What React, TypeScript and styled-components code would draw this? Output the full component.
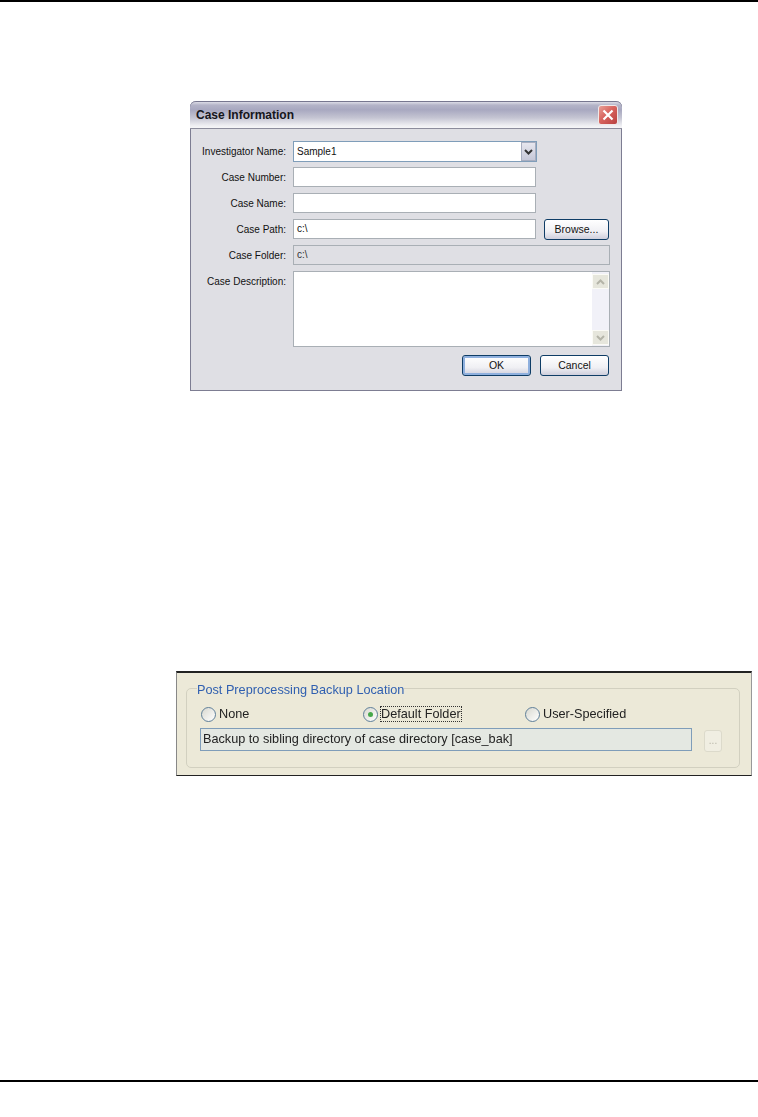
import React from 'react';
import styled, { createGlobalStyle } from 'styled-components';

const Global = createGlobalStyle`
  html, body {
    margin: 0;
    padding: 0;
    background: #fff;
  }
`;

const Page = styled.div`
  width: 758px;
  height: 1117px;
  display: flex;
  flex-direction: column;
  font-family: 'Liberation Sans', Arial, sans-serif;
`;

const Rule = styled.div`
  height: 2px;
  background: #000;
  flex: none;
`;

// case information dialog
const Dialog = styled.div`
  width: 432px;
  height: 290px;
  margin: 99px 0 0 190px;
  box-sizing: border-box;
  display: flex;
  flex-direction: column;
  background: #dfdfe4;
  border: 1px solid #7d7d92;
  border-top: none;
  border-radius: 6px 6px 0 0;
  color: #111;
  font-size: 10px;
`;

const TitleBar = styled.div`
  height: 28px;
  flex: none;
  margin: 0 -1px;
  box-sizing: border-box;
  padding: 0 4px 0 6px;
  display: flex;
  align-items: center;
  justify-content: space-between;
  border-top: 1px solid #77778f;
  border-radius: 6px 6px 0 0;
  border-bottom: 1px solid #8c8c9c;
  background: linear-gradient(#dcdce6 0%, #b4b4c8 12%, #a8a8c0 30%, #c4c4d2 60%, #eeeef2 90%, #f6f6f8 100%);
  font-size: 12px;
  font-weight: bold;
  color: #16161c;
`;

const CloseButton = styled.div`
  width: 20px;
  height: 20px;
  display: flex;
  align-items: center;
  justify-content: center;
  box-sizing: border-box;
  border: 1px solid #f0e8e8;
  border-radius: 3px;
  background: linear-gradient(135deg, #e8a098 0%, #d8645e 45%, #b84040 100%);
`;

const Form = styled.div`
  flex: 1;
  padding-top: 12px;
  display: flex;
  flex-direction: column;
  gap: 5px;
`;

const Row = styled.div`
  display: flex;
  align-items: flex-start;
  min-height: 21px;
`;

const Label = styled.div`
  width: 95px;
  margin-right: 7px;
  flex: none;
  text-align: right;
  line-height: 21px;
  white-space: nowrap;
`;

const TextBox = styled.div<{ $width: number; $disabled?: boolean }>`
  width: ${(p) => p.$width}px;
  height: 20px;
  box-sizing: border-box;
  padding-left: 3px;
  line-height: 18px;
  background: ${(p) => (p.$disabled ? '#dfdfe4' : '#fff')};
  border: 1px solid #a9afb5;
  color: ${(p) => (p.$disabled ? '#333' : '#111')};
`;

const Combo = styled.div`
  width: 244px;
  height: 21px;
  box-sizing: border-box;
  display: flex;
  justify-content: space-between;
  padding-left: 3px;
  line-height: 19px;
  background: #fff;
  border: 1px solid #7f9db9;
`;

const ComboArrow = styled.div`
  width: 15px;
  height: 19px;
  display: flex;
  align-items: center;
  justify-content: center;
  box-sizing: border-box;
  background: linear-gradient(#e6e6ee, #c6c8d8);
  border: 1px solid #f4f4f8;
  outline: 1px solid #a8aec0;
  outline-offset: -1px;
`;

const Button = styled.div<{ $width: number; $isDefault?: boolean }>`
  width: ${(p) => p.$width}px;
  height: 21px;
  box-sizing: border-box;
  text-align: center;
  font-size: 10.5px;
  line-height: 18px;
  border: 1px solid #0f3d66;
  border-radius: 3px;
  background: linear-gradient(#ffffff, #f0f0f4 60%, #cfcfdc);
  box-shadow: ${(p) => (p.$isDefault ? 'inset 0 0 0 2px #8fb0de' : 'none')};
`;

const BrowseButton = styled(Button)`
  margin-left: 8px;
`;

const Memo = styled.div`
  width: 317px;
  height: 76px;
  box-sizing: border-box;
  display: flex;
  justify-content: flex-end;
  background: #fff;
  border: 1px solid #a9afb5;
`;

const ScrollTrack = styled.div`
  width: 17px;
  display: flex;
  flex-direction: column;
  justify-content: space-between;
  padding: 2px 0 1px;
  background: #f1f1f8;
`;

const ScrollButton = styled.div`
  height: 15px;
  display: flex;
  align-items: center;
  justify-content: center;
  box-sizing: border-box;
  border: 1px solid #fbfbf6;
  background: #e6e6dc;
`;

const ButtonBar = styled.div`
  display: flex;
  justify-content: flex-end;
  gap: 9px;
  margin: 3px 12px 0 0;
`;

// backup location panel
const Panel = styled.div`
  width: 576px;
  height: 105px;
  margin: 280px 0 0 176px;
  box-sizing: border-box;
  padding: 6px 10px 0 9px;
  background: #ece9d8;
  border-top: 2px solid #222;
  border-bottom: 1px solid #222;
  border-left: 1px solid #888;
  border-right: 1px solid #999;
  filter: blur(0.35px);
  font-size: 12.7px;
  color: #222;
`;

const Group = styled.fieldset`
  margin: 0;
  width: 554px;
  height: 89px;
  box-sizing: border-box;
  padding: 0 0 0 14px;
  border: 1px solid #d2d0c0;
  border-radius: 5px;
`;

const GroupTitle = styled.legend`
  padding: 4px 0 0;
  margin-left: -4px;
  color: #2f5fb0;
  font-size: 12.7px;
  line-height: 14px;
`;

const RadioRow = styled.div`
  display: flex;
  margin-top: 7px;
  height: 20px;
  align-items: center;
`;

const RadioItem = styled.div`
  width: 162px;
  display: flex;
  align-items: center;
  gap: 3px;
`;

const RadioDot = styled.span<{ $checked?: boolean }>`
  width: 15px;
  height: 15px;
  box-sizing: border-box;
  flex: none;
  display: flex;
  align-items: center;
  justify-content: center;
  border: 1px solid #5f7f99;
  border-radius: 50%;
  background: linear-gradient(135deg, #d8d8d0, #fff);

  &::after {
    content: '';
    width: 5px;
    height: 5px;
    border-radius: 50%;
    background: ${(p) => (p.$checked ? '#46a84a' : 'transparent')};
  }
`;

const RadioText = styled.span<{ $focused?: boolean }>`
  outline: ${(p) => (p.$focused ? '1px dotted #333' : 'none')};
  line-height: 14px;
`;

const PathRow = styled.div`
  display: flex;
  margin: 4px 0 0 -1px;
`;

const PathBox = styled.div`
  width: 492px;
  height: 23px;
  box-sizing: border-box;
  padding-left: 2px;
  line-height: 21px;
  background: #e4e8e2;
  border: 1px solid #7f9db9;
`;

const EllipsisButton = styled.div`
  width: 18px;
  height: 22px;
  margin: 2px 0 0 12px;
  box-sizing: border-box;
  text-align: center;
  line-height: 20px;
  font-size: 10px;
  color: #b8b6a8;
  border: 1px solid #dcdacb;
  border-radius: 3px;
  background: #f0eee2;
`;

const BottomRule = styled(Rule)`
  margin-top: auto;
  margin-bottom: 35px;
`;

const Chevron = ({ up, color }: { up?: boolean; color: string }) => (
  <svg width="9" height="6" viewBox="0 0 9 6">
    <path d={up ? 'M1 5 L4.5 1.5 L8 5' : 'M1 1 L4.5 4.5 L8 1'} fill="none" stroke={color} strokeWidth="2" />
  </svg>
);

const App = () => (
  <Page>
    <Global />
    <Rule />
    <Dialog>
      <TitleBar>
        <span>Case Information</span>
        <CloseButton>
          <svg width="12" height="12" viewBox="0 0 12 12">
            <path d="M1.5 1.5 L10.5 10.5 M10.5 1.5 L1.5 10.5" stroke="#fff" strokeWidth="2.2" />
          </svg>
        </CloseButton>
      </TitleBar>
      <Form>
        <Row>
          <Label>Investigator Name:</Label>
          <Combo>
            Sample1
            <ComboArrow>
              <Chevron color="#333" />
            </ComboArrow>
          </Combo>
        </Row>
        <Row>
          <Label>Case Number:</Label>
          <TextBox $width={243} />
        </Row>
        <Row>
          <Label>Case Name:</Label>
          <TextBox $width={243} />
        </Row>
        <Row>
          <Label>Case Path:</Label>
          <TextBox $width={243}>c:\</TextBox>
          <BrowseButton $width={65}>Browse...</BrowseButton>
        </Row>
        <Row>
          <Label>Case Folder:</Label>
          <TextBox $width={317} $disabled>
            c:\
          </TextBox>
        </Row>
        <Row>
          <Label>Case Description:</Label>
          <Memo>
            <ScrollTrack>
              <ScrollButton>
                <Chevron up color="#b4b4a8" />
              </ScrollButton>
              <ScrollButton>
                <Chevron color="#b4b4a8" />
              </ScrollButton>
            </ScrollTrack>
          </Memo>
        </Row>
        <ButtonBar>
          <Button $width={69} $isDefault>
            OK
          </Button>
          <Button $width={69}>Cancel</Button>
        </ButtonBar>
      </Form>
    </Dialog>
    <Panel>
      <Group>
        <GroupTitle>Post Preprocessing Backup Location</GroupTitle>
        <RadioRow>
          <RadioItem>
            <RadioDot />
            <RadioText>None</RadioText>
          </RadioItem>
          <RadioItem>
            <RadioDot $checked />
            <RadioText $focused>Default Folder</RadioText>
          </RadioItem>
          <RadioItem>
            <RadioDot />
            <RadioText>User-Specified</RadioText>
          </RadioItem>
        </RadioRow>
        <PathRow>
          <PathBox>Backup to sibling directory of case directory [case_bak]</PathBox>
          <EllipsisButton>...</EllipsisButton>
        </PathRow>
      </Group>
    </Panel>
    <BottomRule />
  </Page>
);

export default App;
